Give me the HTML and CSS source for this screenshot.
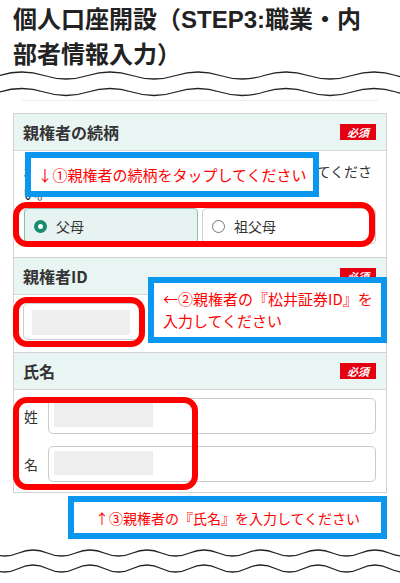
FILE: index.html
```html
<!DOCTYPE html>
<html lang="ja">
<head>
<meta charset="utf-8">
<title>個人口座開設</title>
<link rel="stylesheet" href="styles.css">
</head>
<body>
<div class="shot">
  <h1 class="title">個人口座開設（STEP3:職業・内部者情報入力）</h1>
  <svg class="wave wave-top" viewBox="0 0 400 26" aria-hidden="true">
    <path d="M0 4.5 Q22 -2.5 44 4.5 T88 4.5 T132 4.5 T176 4.5 T220 4.5 T264 4.5 T308 4.5 T352 4.5 T396 4.5 T440 4.5"/>
    <path d="M0 21 Q22 14 44 21 T88 21 T132 21 T176 21 T220 21 T264 21 T308 21 T352 21 T396 21 T440 21"/>
  </svg>
  <div class="rule"></div>

  <div class="card">
    <section class="sec">
      <div class="sec-head"><span class="sec-title">親権者の続柄</span><span class="req">必須</span></div>
      <div class="sec-body sec-body-1">
        <p class="note">お申込者本人との続柄を、以下の中から選択してください。</p>
        <div class="choices">
          <div class="choice choice-on"><span class="radio radio-on"></span><span>父母</span></div>
          <div class="choice"><span class="radio"></span><span>祖父母</span></div>
        </div>
      </div>
    </section>
    <section class="sec">
      <div class="sec-head"><span class="sec-title">親権者ID</span><span class="req">必須</span></div>
      <div class="sec-body sec-body-2">
        <div class="field field-id"><span class="mask"></span></div>
      </div>
    </section>
    <section class="sec">
      <div class="sec-head"><span class="sec-title">氏名</span><span class="req">必須</span></div>
      <div class="sec-body sec-body-3">
        <div class="name-row"><span class="name-label">姓</span><div class="field field-name"><span class="mask"></span></div></div>
        <div class="name-row"><span class="name-label">名</span><div class="field field-name"><span class="mask"></span></div></div>
      </div>
    </section>
  </div>

  <svg class="wave wave-bottom" viewBox="0 0 400 26" aria-hidden="true">
    <path d="M-38.25 5 Q-24 -1 -9.75 5 T18.75 5 T47.25 5 T75.75 5 T104.25 5 T132.75 5 T161.25 5 T189.75 5 T218.25 5 T246.75 5 T275.25 5 T303.75 5 T332.25 5 T360.75 5 T389.25 5 T417.75 5"/>
    <path d="M-38.25 20.5 Q-24 13.5 -9.75 20.5 T18.75 20.5 T47.25 20.5 T75.75 20.5 T104.25 20.5 T132.75 20.5 T161.25 20.5 T189.75 20.5 T218.25 20.5 T246.75 20.5 T275.25 20.5 T303.75 20.5 T332.25 20.5 T360.75 20.5 T389.25 20.5 T417.75 20.5"/>
  </svg>

  <div class="mark mark-1"></div>
  <div class="mark mark-2"></div>
  <div class="mark mark-3"></div>
  <div class="callout callout-1">↓①親権者の続柄をタップしてください</div>
  <div class="callout callout-2"><span>←②親権者の『松井証券ID』を</span><span>入力してください</span></div>
  <div class="callout callout-3">↑③親権者の『氏名』を入力してください</div>
</div>
</body>
</html>
```

FILE: styles.css
```css
* { box-sizing: border-box; }

html, body {
  margin: 0;
  padding: 0;
  background: #fff;
}

body {
  font-family: "Noto Sans CJK JP", "Noto Sans", sans-serif;
  color: #333;
}

.shot {
  position: relative;
  width: 400px;
  height: 583px;
  overflow: hidden;
}

.title {
  margin: 0;
  padding: 2px 20px 0 13px;
  font-family: "Liberation Sans", "Noto Sans CJK JP", sans-serif;
  font-size: 24px;
  line-height: 35px;
  font-weight: bold;
  color: #222;
}

.wave {
  display: block;
  width: 400px;
  height: 26px;
  overflow: visible;
}

.wave path {
  fill: none;
  stroke: #222;
  stroke-width: 1.3;
}

.wave-top { margin-top: -1px; }
.wave-bottom { margin-top: 55px; }

.rule {
  height: 1px;
  background: #ededed;
  margin: 3px 22px 0;
}

.card {
  margin: 12px 13px 0;
  border: 1px solid #d3d3d3;
}

.sec + .sec { border-top: 1px solid #d3d3d3; }

.sec-head {
  height: 37px;
  display: flex;
  align-items: center;
  justify-content: space-between;
  padding: 0 10px 0 9px;
  background: #e9f5f2;
  border-bottom: 1px solid #d6d6d6;
}

.sec-title {
  font-size: 16px;
  font-weight: bold;
  color: #333;
}

.req {
  width: 36px;
  height: 16px;
  display: flex;
  align-items: center;
  justify-content: center;
  background: #e40011;
  color: #fff;
  font-size: 11px;
  font-weight: bold;
  font-style: italic;
  line-height: 1;
}

.sec-body-1 { padding: 9px 10px 13px 9px; }
.sec-body-2 { padding: 8px 10px 12px 9px; }
.sec-body-3 {
  padding: 8px 10px 10px 9px;
  display: flex;
  flex-direction: column;
  gap: 12px;
}

.note {
  margin: 0;
  font-size: 14px;
  line-height: 22px;
  color: #333;
}

.choices {
  margin-top: 4px;
  margin-left: 1px;
  display: grid;
  grid-template-columns: 1fr 1fr;
  gap: 4px;
}

.choice {
  height: 36px;
  display: flex;
  align-items: center;
  gap: 9px;
  padding-left: 9px;
  border: 1px solid #cfcfcf;
  border-radius: 4px;
  background: #fff;
  font-size: 14px;
  color: #333;
}

.choice-on {
  background: #e6f3f0;
  border-color: #8dbbb1;
}

.radio {
  width: 13px;
  height: 13px;
  border-radius: 50%;
  border: 1.5px solid #777;
  background: #fff;
  flex: none;
}

.radio-on {
  border: 4px solid #178a6f;
}

.field {
  border: 1px solid #cccccc;
  border-radius: 5px;
  background: #fff;
}

.field-id {
  width: 117px;
  height: 37px;
  padding: 6px 8px;
}

.field-id .mask {
  display: block;
  width: 98px;
  height: 25px;
  background: #eeeeee;
}

.name-row {
  display: flex;
  align-items: center;
}

.name-label {
  width: 25px;
  flex: none;
  font-size: 14px;
  color: #333;
  padding-left: 1px;
}

.field-name {
  flex: 1;
  height: 36px;
  padding: 4px 5px;
}

.field-name .mask {
  display: block;
  width: 99px;
  height: 24px;
  background: #eeeeee;
}

/* annotation overlays */
.mark {
  position: absolute;
  border: 6px solid #ff0000;
  border-radius: 14px;
}

.mark-1 { left: 13px; top: 202px; width: 362px; height: 45px; }
.mark-2 { left: 13px; top: 297px; width: 132px; height: 50px; }
.mark-3 { left: 13px; top: 397px; width: 185px; height: 93px; }

.callout {
  position: absolute;
  border: 6px solid #0a97ef;
  background: #fff;
  color: #ff0000;
  font-size: 14px;
  display: flex;
  align-items: center;
  justify-content: center;
  white-space: nowrap;
}

.callout-1 { left: 25px; top: 152px; width: 294px; height: 45px; font-size: 15px; }
.callout-2 {
  left: 148px; top: 277px; width: 239px; height: 66px;
  flex-direction: column;
  align-items: flex-start;
  padding-left: 9px;
  font-size: 15px;
  line-height: 22px;
}
.callout-3 { left: 68px; top: 496px; width: 319px; height: 43px; }
```
